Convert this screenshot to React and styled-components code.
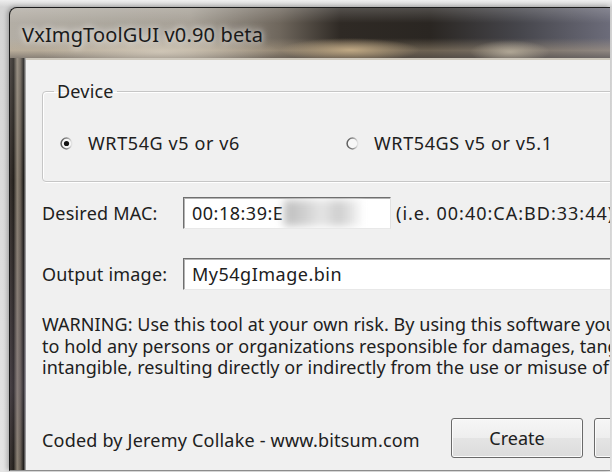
import styled, { createGlobalStyle } from "styled-components";

const GlobalStyle = createGlobalStyle`
  html, body {
    margin: 0;
    padding: 0;
  }
  body {
    background: #e2e2e2;
    font-family: "Noto Sans", "Open Sans", sans-serif;
    font-size: 18px;
    color: #202020;
  }
`;

const Desktop = styled.div`
  width: 612px;
  height: 472px;
  box-sizing: border-box;
  padding: 7px 2px 0 9px;
  overflow: hidden;
  background: linear-gradient(180deg, #eeeeee 0, #d4d4d4 7px, #e4e4e4 100%);
`;

const Window = styled.div`
  height: 464px;
  box-sizing: border-box;
  display: flex;
  flex-direction: column;
  border: 1px solid #1c1c1c;
  border-right: none;
  border-bottom-color: #8c8c8c;
  border-radius: 8px 0 0 0;
  overflow: hidden;
  background: #2d2925;
  box-shadow: -2px -1px 4px rgba(0, 0, 0, 0.25);
`;

const TitleBar = styled.div`
  height: 50px;
  flex: 0 0 50px;
  display: flex;
  align-items: center;
  padding: 3px 0 0 12px;
  box-sizing: border-box;
  background:
    radial-gradient(ellipse 70px 12px at 340px 42px, rgba(205, 180, 140, 0.85), transparent),
    radial-gradient(ellipse 40px 12px at 500px 44px, rgba(200, 190, 170, 0.7), transparent),
    radial-gradient(ellipse 120px 18px at 150px 44px, rgba(220, 212, 198, 0.7), transparent),
    linear-gradient(180deg, rgba(255, 255, 255, 0.18) 0, transparent 30%, transparent 60%, rgba(190, 170, 140, 0.45) 85%, rgba(110, 100, 90, 0.6) 100%),
    linear-gradient(90deg, #b3aea5 0%, #a7a197 30%, #6e665c 45%, #2f2a25 55%, #2a2622 70%, #46464c 85%, #6c6c7a 100%);
`;

const Title = styled.span`
  font-size: 20px;
  letter-spacing: 0.15px;
  color: #1a1a1a;
  text-shadow: 0 0 6px rgba(255, 255, 255, 0.8), 0 0 10px rgba(255, 255, 255, 0.5);
`;

const Body = styled.div`
  flex: 1;
  display: flex;
  min-height: 0;
`;

const SideFrame = styled.div`
  flex: 0 0 16px;
  background:
    linear-gradient(180deg, rgba(255, 255, 255, 0.12) 0, transparent 30%, rgba(120, 110, 140, 0.25) 80%, transparent 100%),
    linear-gradient(90deg, #3a3430 0, #24201c 22%, #8c8274 45%, #6a6156 65%, #1e1c1a 85%, #bdbdbd 100%);
`;

const Client = styled.div`
  flex: 1;
  display: flex;
  flex-direction: column;
  padding-left: 16px;
  background: #f0f0f0;
  border-top: 2px solid #cfc9bd;
  overflow: hidden;
`;

const GroupBox = styled.fieldset`
  margin: 20px 0 0 0;
  padding: 0;
  width: 600px;
  height: 102px;
  box-sizing: border-box;
  border: 1px solid #c6c6c6;
  border-radius: 4px;
  box-shadow: inset 1px 1px 0 #ffffff, 1px 1px 0 #ffffff;
`;

const Legend = styled.legend`
  margin-left: 11px;
  padding: 0 3px;
  line-height: 22px;
  letter-spacing: 0.2px;
`;

const RadioRow = styled.div`
  display: flex;
  align-items: center;
  margin-top: 29px;
  padding-left: 17px;
  height: 24px;
`;

const RadioItem = styled.label`
  flex: 0 0 ${(p) => p.$width}px;
  display: flex;
  align-items: center;
  gap: 15px;
  letter-spacing: 0.6px;
`;

const RadioMark = ({ checked }) => (
  <svg width="13" height="13" viewBox="0 0 13 13">
    <defs>
      <linearGradient id="ring" x1="0" y1="0" x2="1" y2="0">
        <stop offset="0" stopColor="#5e5e5e" />
        <stop offset="0.55" stopColor="#8e8e8e" />
        <stop offset="1" stopColor="#e8e8e8" />
      </linearGradient>
    </defs>
    <circle cx="6.5" cy="6.5" r="5.4" fill="#f7f7f7" stroke="url(#ring)" strokeWidth="1.5" />
    {checked && <circle cx="6.5" cy="6.5" r="2.6" fill="#151515" />}
  </svg>
);

const FormRow = styled.div`
  display: flex;
  align-items: center;
  margin-top: ${(p) => p.$gap}px;
  height: 32px;
`;

const Label = styled.span`
  flex: 0 0 141px;
  letter-spacing: 0.2px;
`;

const TextBox = styled.div`
  flex: 0 0 ${(p) => p.$width}px;
  height: 32px;
  box-sizing: border-box;
  display: flex;
  align-items: center;
  padding-left: 8px;
  background: #ffffff;
  border: 1px solid;
  border-color: #6f6f6f #e2e2e2 #e8e8e8 #6f6f6f;
  box-shadow: inset 1px 1px 0 #b4b4b4;
  letter-spacing: 0.5px;
  white-space: nowrap;
  overflow: hidden;
`;

// blurred-out tail of the MAC address
const Smudge = styled.span`
  display: inline-block;
  width: 76px;
  height: 26px;
  margin-left: 1px;
  background: linear-gradient(90deg, #bcbcbc 0%, #cecece 25%, #e6e6e6 50%, #cdcdcd 72%, #f4f4f4 100%);
  filter: blur(4px);
`;

const Hint = styled.span`
  margin-left: 5px;
  letter-spacing: 1px;
  white-space: nowrap;
`;

const Warning = styled.div`
  margin-top: 24px;
  line-height: 21.5px;
  letter-spacing: 0.05px;
  white-space: nowrap;
`;

const Line = styled.div``;

const Footer = styled.div`
  display: flex;
  align-items: center;
  margin-top: 39px;
`;

const Credit = styled.span`
  flex: 0 0 409px;
  padding-top: 4px;
  letter-spacing: 0.2px;
`;

const Button = styled.button`
  flex: 0 0 132px;
  height: 40px;
  margin-right: 11px;
  border: 1px solid #6a6a6a;
  border-radius: 3px;
  background: linear-gradient(180deg, #f6f6f6 0%, #eeeeee 50%, #e4e4e4 51%, #dcdcdc 100%);
  box-shadow: inset 0 0 0 1px #fbfbfb;
  font-family: inherit;
  font-size: 18px;
  color: #202020;
`;

const warningLines = [
  "WARNING: Use this tool at your own risk. By using this software you agree not",
  "to hold any persons or organizations responsible for damages, tangible or",
  "intangible, resulting directly or indirectly from the use or misuse of this software.",
];

export default function App() {
  return (
    <>
      <GlobalStyle />
      <Desktop>
        <Window>
          <TitleBar>
            <Title>VxImgToolGUI v0.90 beta</Title>
          </TitleBar>
          <Body>
            <SideFrame />
            <Client>
              <GroupBox>
                <Legend>Device</Legend>
                <RadioRow>
                  <RadioItem $width={286}>
                    <RadioMark checked />
                    WRT54G v5 or v6
                  </RadioItem>
                  <RadioItem $width={260}>
                    <RadioMark />
                    WRT54GS v5 or v5.1
                  </RadioItem>
                </RadioRow>
              </GroupBox>

              <FormRow $gap={15}>
                <Label>Desired MAC:</Label>
                <TextBox $width={208}>
                  00:18:39:E
                  <Smudge />
                </TextBox>
                <Hint>(i.e. 00:40:CA:BD:33:44)</Hint>
              </FormRow>

              <FormRow $gap={29}>
                <Label>Output image:</Label>
                <TextBox $width={460}>My54gImage.bin</TextBox>
              </FormRow>

              <Warning>
                {warningLines.map((text, i) => (
                  <Line key={i}>{text}</Line>
                ))}
              </Warning>

              <Footer>
                <Credit>Coded by Jeremy Collake - www.bitsum.com</Credit>
                <Button>Create</Button>
                <Button>Exit</Button>
              </Footer>
            </Client>
          </Body>
        </Window>
      </Desktop>
    </>
  );
}
